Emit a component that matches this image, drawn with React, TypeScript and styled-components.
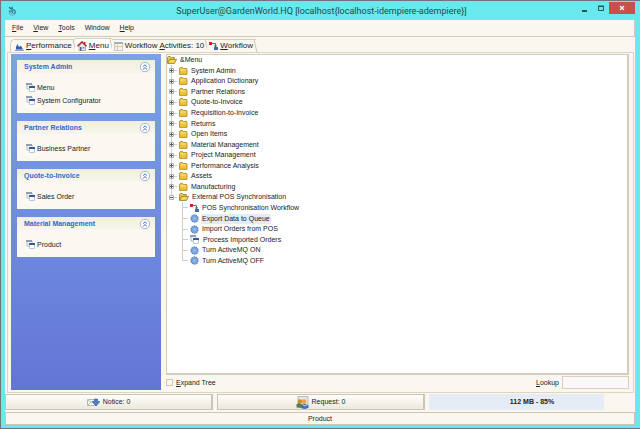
import React from "react";
import styled, { createGlobalStyle, css } from "styled-components";

const Global = createGlobalStyle`
  * { box-sizing: border-box; }
  body { margin: 0; }
  button, input { font: inherit; color: inherit; margin: 0; padding: 0; border: 0; background: none; border-radius: 0; }
  u { text-underline-offset: 1px; text-decoration-thickness: 1px; }
  ul { list-style: none; margin: 0; padding: 0; }
  svg { display: block; flex: none; }
`;

const Window = styled.div`
  display: flex;
  flex-direction: column;
  min-height: 100vh;
  padding: 1px 5px 3px 4px;
  border: solid #737377;
  border-width: 1px 0 1px 1px;
  background: #69e8ee;
  color: #222;
  font: 7px/10px "Liberation Sans", Arial, sans-serif;
`;

const TitleBar = styled.header`
  display: grid;
  grid-template-columns: 1fr auto 1fr;
  height: 18px;
  align-items: center;
  padding-left: 3px;
`;

const Title = styled.h1`
  margin: 0;
  font: 9px/16px Roboto, "Open Sans", sans-serif;
  color: #23484c;
`;

const WindowControls = styled.div`
  display: flex;
  align-self: flex-start;
  justify-self: end;
`;

const ControlButton = styled.button<{ $close?: boolean }>`
  display: grid;
  place-items: center;
  width: ${(p) => (p.$close ? 26 : 16)}px;
  height: 12px;
  background: ${(p) => (p.$close ? "#c7504f" : "transparent")};
`;

const Client = styled.div`
  flex: 1;
  display: flex;
  flex-direction: column;
  background: #faf7f0;
`;

const MenuBar = styled.nav`
  display: flex;
  height: 17px;
  align-items: center;
  gap: 10px;
  padding: 0 7px;
  border: solid #d2cab8;
  border-width: 0 1px 1px 0;
`;

const MenuItem = styled.button`
  line-height: 10px;
`;

const TabStrip = styled.div`
  display: flex;
  align-items: flex-end;
  height: 15px;
  padding-left: 5px;
  font-size: 8px;
`;

const TabButton = styled.button<{ $active?: boolean }>`
  position: relative;
  display: flex;
  align-items: center;
  gap: 2px;
  height: ${(p) => (p.$active ? 14 : 13)}px;
  padding: 0 3px 0 2px;
  border-top: 1px solid #d8cfb9;
  white-space: nowrap;
  background: ${(p) => (p.$active ? "#fffdf9" : "#faf7f0")};
  &::after {
    content: "";
    position: absolute;
    top: 0;
    bottom: 0;
    right: 0;
    width: 1px;
    background: #d0c6ae;
    transform: skewX(12deg);
  }
  &:first-child {
    padding-left: 4px;
    border-left: 1px solid #d8cfb9;
    border-top-left-radius: 5px;
  }
`;

const TabPanel = styled.main`
  flex: 1;
  display: grid;
  grid-template-columns: 150px 1fr;
  gap: 5px;
  margin: 0 1px 0 2px;
  padding: 1px 4px 2px 3px;
  border: 1px solid #ded5c1;
`;

const Sidebar = styled.aside`
  display: flex;
  flex-direction: column;
  gap: 8px;
  padding: 6px;
  background: linear-gradient(#7ba2e7, #6375d6);
`;

const Card = styled.section`
  background: #faf8f0;
`;

const CardHeader = styled.div`
  display: flex;
  align-items: center;
  justify-content: space-between;
  height: 14px;
  padding: 0 4px 0 7px;
  border-bottom: 1px solid #fbf9f2;
  background: linear-gradient(#f0efde, #f8f6ec);
`;

const CardTitle = styled.h2`
  margin: 0;
  font-size: 7px;
  line-height: 10px;
  color: #3166cf;
`;

const CardBody = styled.div`
  display: flex;
  flex-direction: column;
  padding: 7px 9px 6px;
`;

const CardLink = styled.a`
  display: flex;
  align-items: center;
  gap: 1px;
  height: 13px;
  color: inherit;
  text-decoration: none;
`;

const Content = styled.div`
  display: flex;
  flex-direction: column;
  min-width: 0;
`;

const TreePane = styled.div`
  flex: 1;
  background: #fff;
  border: solid #d4cdbd;
  border-width: 1px 2px 2px 1px;
`;

const Tree = styled.ul`
  display: grid;
  grid-auto-rows: 1fr;
  height: 211px;
`;

const TreeRow = styled.li<{ $level: number }>`
  display: flex;
  align-items: center;
  gap: 2px;
  padding-left: ${(p) => (p.$level === 2 ? 4 : 0)}px;
  svg { margin-block: -1px; }
`;

const TreeLabel = styled.span<{ $selected?: boolean }>`
  padding: 0 1px;
  white-space: nowrap;
  ${(p) => p.$selected && css`background: #e6ecf6;`}
`;

const TreeFooter = styled.div`
  display: flex;
  align-items: center;
  justify-content: space-between;
  height: 15px;
`;

const Field = styled.label`
  display: flex;
  align-items: center;
  gap: 3px;
`;

const CheckBox = styled.input`
  appearance: none;
  width: 7px;
  height: 7px;
  border: 1px solid #cfc7b2;
`;

const LookupInput = styled.input`
  width: 67px;
  height: 13px;
  border: 1px solid #d8d0bf;
  background: #fbf8fa;
`;

const StatusBar = styled.div`
  display: grid;
  grid-template-columns: 208fr 208fr 206fr;
  gap: 4px;
  margin-top: 1px;
`;

const StatusButton = styled.button`
  display: flex;
  align-items: center;
  justify-content: center;
  gap: 3px;
  height: 16px;
  border: solid #cbc5b5;
  border-width: 1px 2px 1px 1px;
  background: linear-gradient(#fffefa, #ebe8de);
`;

const MemoryMeter = styled.div<{ $percent: number }>`
  display: grid;
  place-items: center;
  height: 16px;
  font-weight: 700;
  background: linear-gradient(90deg, #e6ecf5 ${(p) => p.$percent}%, transparent ${(p) => p.$percent}%);
`;

const StatusLine = styled.footer`
  height: 13px;
  margin-top: 2px;
  border: 1px solid #cfc5b4;
  text-align: center;
  line-height: 11px;
`;

const WindowIcon = () => (
  <svg width="10" height="9" viewBox="0 0 10 9">
    <path d="M1 1h5v5H1z" fill="#f7f8fb" stroke="#aeb9c4" />
    <path d="M0 0h6v2H0z" fill="#8f9fb2" />
    <path d="M3.5 3.5h5v5h-5z" fill="#fff" stroke="#bcc8d6" />
    <path d="M3 3h6v2H3z" fill="#325c98" />
  </svg>
);

const CollapseIcon = () => (
  <svg width="12" height="12" viewBox="0 0 12 12" fill="none">
    <circle cx="6" cy="6" r="4.7" fill="#fff" stroke="#9fb3dc" />
    <path d="M4 5.7 6 3.8l2 1.9M4 8.4l2-1.9 2 1.9" stroke="#4d72c4" />
  </svg>
);

const ClosedFolder = () => (
  <svg width="9" height="8" viewBox="0 0 9 8">
    <path d="M.5 7.4V1.3l.8-.8h2.2l.9 1h3.1l.5.6v5.3z" fill="#edc33c" stroke="#ad8420" strokeWidth=".8" />
    <path d="M1.5 2.5h5.3v.9H1.5z" fill="#fff09d" />
  </svg>
);

const OpenFolder = () => (
  <svg width="10" height="8" viewBox="0 0 10 8">
    <path d="M.5 7.2V1.3l.8-.8h2l.9 1h3.1v2" fill="#ebc64b" stroke="#997b22" strokeWidth=".8" />
    <path d="M.6 7.4 2.6 3.4h6.9L7.4 7.4z" fill="#f8d84d" stroke="#8d741d" strokeWidth=".8" />
  </svg>
);

const Expander = ({ open = false }: { open?: boolean }) => (
  <svg width="10" height="11" viewBox="0 0 10 11" fill="none">
    <path d={open ? "M4.5 0v3" : "M4.5 0v11"} stroke="#d0d0d0" />
    <path d="M7 5.5h3" stroke="#d0d0d0" />
    <path d="M2.5 3.5h4v4h-4z" fill="#fff" stroke="#b0b0b0" />
    <path d="M3 5.5h3" stroke="#555" />
    {!open && <path d="M4.5 4v3" stroke="#555" />}
  </svg>
);

const Branch = ({ last }: { last: boolean }) => (
  <svg width="17" height="11" viewBox="0 0 17 11" fill="none">
    <path d={last ? "M11.5 0v5.5H17" : "M11.5 0v11M11.5 5.5H17"} stroke="#cecece" />
  </svg>
);

const ProcessIcon = () => (
  <svg width="9" height="9" viewBox="0 0 9 9">
    <circle cx="4.5" cy="4.5" r="3.6" fill="#7ba4d9" stroke="#5485c1" strokeWidth="1.1" strokeDasharray="1.5 .7" />
    <circle cx="4.5" cy="4.5" r="1.2" fill="#9bbce5" />
  </svg>
);

const WorkflowIcon = () => (
  <svg width="9" height="10" viewBox="0 0 9 10">
    <path d="M0 1h3v3H0z" fill="#e11b24" />
    <path d="M3 2.5h3.5V6M5 4.5l1.5 1.3L8 4.5" fill="none" stroke="#444" strokeWidth=".8" />
    <path d="M5 6h4v3H5z" fill="#406ba8" />
  </svg>
);

const PerformanceIcon = () => (
  <svg width="9" height="9" viewBox="0 0 9 9">
    <path d="M1 7.5V5l1.5-3L4 5l2-1.3 2 3.8z" fill="#315e9c" />
    <path d="M0 8.3h9" stroke="#6d92bf" />
  </svg>
);

const HomeIcon = () => (
  <svg width="10" height="10" viewBox="0 0 10 10">
    <path d="M2 5v4.5h6.5V5L5.2 2z" fill="#e8eaed" stroke="#8a8c92" strokeWidth=".7" />
    <path d="M.5 5.2 5 .8l4.5 4.4M7.7 3V1" fill="none" stroke="#ba2528" strokeWidth="1.4" />
    <path d="M3 6h1.6v3.5H3z" fill="#476585" />
    <path d="M5.8 6h1.5v1.5H5.8z" fill="#568bbb" />
  </svg>
);

const ActivitiesIcon = () => (
  <svg width="9" height="10" viewBox="0 0 9 10">
    <path d="M.5 1.5h8v8h-8z" fill="#f8f5e8" stroke="#c6c9cc" />
    <path d="M0 1h9v2H0z" fill="#9eb3c8" />
    <path d="M1 5.5h7M3.5 3v6" stroke="#e7c890" />
  </svg>
);

const NoticeIcon = () => (
  <svg width="13" height="9" viewBox="0 0 13 9">
    <path d="M.5 1.5h8v6h-8zM1 2l3.5 3L8 2M1 7l2.5-2.5" fill="#f8f8f6" stroke="#a5a7a8" strokeWidth=".8" />
    <path d="M7.5 1h3v2.5H13L9 8 5 3.5h2.5z" fill="#4b7fc2" stroke="#315f9a" strokeWidth=".6" />
  </svg>
);

const RequestIcon = () => (
  <svg width="13" height="13" viewBox="0 0 13 13">
    <path d="M2 .5h10v9H2z" fill="#e2e6ea" stroke="#9ba5ad" strokeWidth=".7" />
    <path d="M.5 11.5V8.3L3 6.8l3 1.7v3.5z" fill="#577e45" />
    <path d="M5.5 12.5V9L8 7.4l4.5 1.8v2.6L9.5 13z" fill="#3c70b5" />
    <circle cx="4" cy="5.5" r="2.2" fill="#d4882c" />
    <circle cx="8" cy="5.7" r="2.4" fill="#eaa545" />
    <path d="m7 9 2 1 2-1.4" fill="none" stroke="#c9dcf2" />
  </svg>
);

const AppIcon = () => (
  <svg width="9" height="10" viewBox="0 0 9 10" fill="none">
    <path d="M1 1.3 4 3.5M3.7.8l.8 2.1" stroke="#316e91" strokeWidth="1.3" />
    <path d="M2 4.2C1 8 3.8 9.7 6 8c2.3-1.8.8-5-1.3-3.8-1.4.9-.7 2.5.5 2.3" stroke="#317f9d" strokeWidth="1.4" />
    <path d="M2 6.5c.2 2 2 2.8 3.7 1.7" stroke="#d3f2f5" strokeWidth=".8" />
  </svg>
);

const menus = ["File", "View", "Tools", "Window", "Help"];
const tabs = [
  { before: "", key: "P", after: "erformance", icon: <PerformanceIcon /> },
  { before: "", key: "M", after: "enu", icon: <HomeIcon />, active: true },
  { before: "Workflow ", key: "A", after: "ctivities: 10", icon: <ActivitiesIcon /> },
  { before: "", key: "W", after: "orkflow", icon: <WorkflowIcon /> },
];
const cards = [
  { title: "System Admin", links: ["Menu", "System Configurator"] },
  { title: "Partner Relations", links: ["Business Partner"] },
  { title: "Quote-to-Invoice", links: ["Sales Order"] },
  { title: "Material Management", links: ["Product"] },
];
const folders = [
  "System Admin", "Application Dictionary", "Partner Relations", "Quote-to-Invoice",
  "Requisition-to-Invoice", "Returns", "Open Items", "Material Management",
  "Project Management", "Performance Analysis", "Assets", "Manufacturing",
];
const entries = [
  { label: "POS Synchronisation Workflow", icon: <WorkflowIcon /> },
  { label: "Export Data to Queue", icon: <ProcessIcon />, selected: true },
  { label: "Import Orders from POS", icon: <ProcessIcon /> },
  { label: "Process Imported Orders", icon: <WindowIcon /> },
  { label: "Turn ActiveMQ ON", icon: <ProcessIcon /> },
  { label: "Turn ActiveMQ OFF", icon: <ProcessIcon /> },
];

export default function App() {
  return (
    <>
      <Global />
      <Window>
        <TitleBar>
          <AppIcon />
          <Title>SuperUser@GardenWorld.HQ [localhost{"{"}localhost-idempiere-adempiere{"}"}]</Title>
          <WindowControls>
            <ControlButton aria-label="Minimize">
              <svg width="8" height="8" viewBox="0 0 8 8"><path d="M1 6h5v2H1z" fill="#24565a" /></svg>
            </ControlButton>
            <ControlButton aria-label="Maximize">
              <svg width="8" height="7" viewBox="0 0 8 7"><path d="M1.5 1.5h5v4h-5zM1 1h6" fill="none" stroke="#24565a" /></svg>
            </ControlButton>
            <ControlButton $close aria-label="Close">
              <svg width="6" height="6" viewBox="0 0 6 6"><path d="m1 1 4 4m0-4L1 5" stroke="#fff" strokeWidth="1.2" /></svg>
            </ControlButton>
          </WindowControls>
        </TitleBar>
        <Client>
          <MenuBar>
            {menus.map((m) => <MenuItem key={m}>{m === "Window" ? m : <><u>{m[0]}</u>{m.slice(1)}</>}</MenuItem>)}
          </MenuBar>
          <TabStrip role="tablist">
            {tabs.map((t) => (
              <TabButton key={t.after} role="tab" aria-selected={!!t.active} $active={t.active}>
                {t.icon}
                <span>{t.before}<u>{t.key}</u>{t.after}</span>
              </TabButton>
            ))}
          </TabStrip>
          <TabPanel>
            <Sidebar>
              {cards.map((c) => (
                <Card key={c.title}>
                  <CardHeader>
                    <CardTitle>{c.title}</CardTitle>
                    <button aria-label={`Collapse ${c.title}`}><CollapseIcon /></button>
                  </CardHeader>
                  <CardBody>
                    {c.links.map((l) => <CardLink key={l} href="#"><WindowIcon />{l}</CardLink>)}
                  </CardBody>
                </Card>
              ))}
            </Sidebar>
            <Content>
              <TreePane>
                <Tree>
                  <TreeRow $level={0}><OpenFolder /><TreeLabel>&amp;Menu</TreeLabel></TreeRow>
                  {folders.map((f) => (
                    <TreeRow key={f} $level={1}><Expander /><ClosedFolder /><TreeLabel>{f}</TreeLabel></TreeRow>
                  ))}
                  <TreeRow $level={1}><Expander open /><OpenFolder /><TreeLabel>External POS Synchronisation</TreeLabel></TreeRow>
                  {entries.map((e, i) => (
                    <TreeRow key={e.label} $level={2}>
                      <Branch last={i === entries.length - 1} />
                      {e.icon}
                      <TreeLabel $selected={e.selected}>{e.label}</TreeLabel>
                    </TreeRow>
                  ))}
                </Tree>
              </TreePane>
              <TreeFooter>
                <Field><CheckBox type="checkbox" /><span><u>E</u>xpand Tree</span></Field>
                <Field><span><u>L</u>ookup</span><LookupInput type="text" /></Field>
              </TreeFooter>
            </Content>
          </TabPanel>
          <StatusBar>
            <StatusButton><NoticeIcon />Notice: 0</StatusButton>
            <StatusButton><RequestIcon />Request: 0</StatusButton>
            <MemoryMeter $percent={85}>112 MB - 85%</MemoryMeter>
          </StatusBar>
          <StatusLine>Product</StatusLine>
        </Client>
      </Window>
    </>
  );
}
